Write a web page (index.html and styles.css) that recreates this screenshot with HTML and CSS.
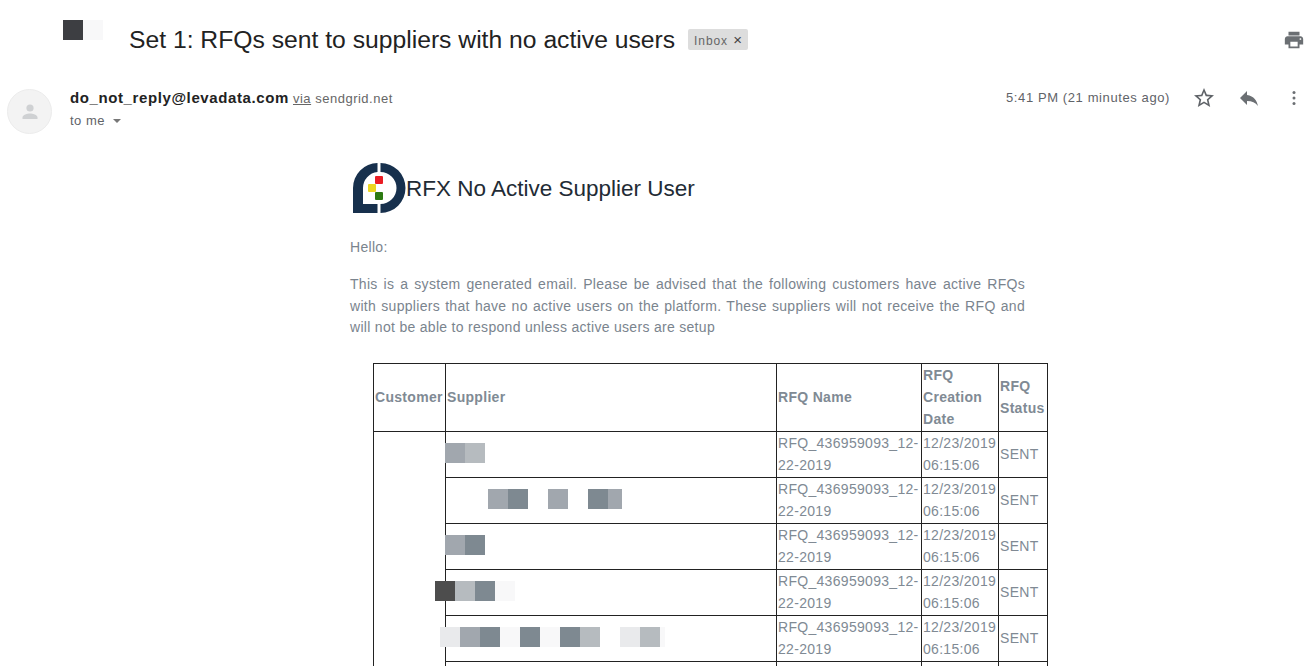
FILE: index.html
```html
<!DOCTYPE html>
<html lang="en">
<head>
<meta charset="UTF-8">
<title>Set 1: RFQs sent to suppliers with no active users</title>
<link rel="stylesheet" href="styles.css">
</head>
<body>

<div class="page">
  <div class="subject-row">
    <div class="mosaic subject-mosaic"><i class="t-dark"></i><i class="t-ghost"></i></div>
    <h1 class="subject">Set 1: RFQs sent to suppliers with no active users</h1>
    <span class="label">Inbox <b>&times;</b></span>
    <svg class="print-icon" viewBox="0 0 24 24" width="22" height="22"><path fill="#6b6f73" d="M19 8H5c-1.660 0-3 1.340-3 3v6h4v4h12v-4h4v-6c0-1.660-1.340-3-3-3zm-3 11H8v-5h8v5zm3-7c-.550 0-1-.450-1-1s.450-1 1-1 1 .450 1 1-.450 1-1 1zm-1-9H6v4h12V3z"/></svg>
  </div>

  <div class="sender-row">
    <div class="avatar">
      <svg viewBox="0 0 24 24" width="24" height="24"><circle cx="12" cy="8" r="3.600" fill="#cfd1d3"/><path fill="#cfd1d3" d="M4.500 19v-1.600c0-2.600 5-4 7.500-4s7.500 1.400 7.500 4V19z"/></svg>
    </div>
    <div class="sender-info">
      <div class="sender-line"><strong>do_not_reply@levadata.com</strong> <u>via</u> sendgrid.net</div>
      <div class="to-line">to me <span class="caret"></span></div>
    </div>
    <div class="sender-actions">
      <span class="time">5:41 PM (21 minutes ago)</span>
      <svg class="star-icon" viewBox="0 0 24 24" width="24" height="24"><path fill="#5f6368" d="M22 9.240l-7.190-.620L12 2 9.190 8.630 2 9.240l5.460 4.730L5.820 21 12 17.270 18.180 21l-1.630-7.030L22 9.240zM12 15.400l-3.760 2.270 1-4.280-3.320-2.880 4.380-.380L12 6.100l1.710 4.040 4.380.380-3.320 2.880 1 4.280L12 15.400z"/></svg>
      <svg class="reply-icon" viewBox="0 0 24 24" width="24" height="24"><path fill="#6b6f73" d="M10 9V5l-7 7 7 7v-4.100c5 0 8.500 1.600 11 5.100-1-5-4-10-11-11z"/></svg>
      <svg class="more-icon" viewBox="0 0 24 24" width="24" height="24"><circle cx="12" cy="6.500" r="1.500" fill="#6b6f73"/><circle cx="12" cy="12" r="1.500" fill="#6b6f73"/><circle cx="12" cy="17.500" r="1.500" fill="#6b6f73"/></svg>
    </div>
  </div>

  <div class="mail-body">
    <div class="mail-title">
      <svg class="logo" viewBox="0 0 56 56" width="56" height="56">
        <path fill="#17304d" d="M27.500 2A25 25 0 0 0 3 27V52H27.500V43H13V27A16 16 0 0 1 27.500 11Z"/>
        <path fill="#17304d" d="M30.500 2A25 25 0 0 1 30.500 52V43A16 16 0 0 0 30.500 11Z"/>
        <rect x="25" y="15" width="8" height="8" rx="1" fill="#ea1c24"/>
        <rect x="18" y="23" width="8" height="8" rx="1" fill="#ecd620"/>
        <rect x="25" y="31" width="8" height="8" rx="1" fill="#2c7a12"/>
      </svg>
      <h2>RFX No Active Supplier User</h2>
    </div>
    <p class="greeting">Hello:</p>
    <p class="intro">This is a system generated email. Please be advised that the following customers have active RFQs with suppliers that have no active users on the platform. These suppliers will not receive the RFQ and will not be able to respond unless active users are setup</p>

    <table class="rfq-table">
      <colgroup><col class="c-customer"><col class="c-supplier"><col class="c-name"><col class="c-date"><col class="c-status"></colgroup>
      <thead>
        <tr><th>Customer</th><th>Supplier</th><th>RFQ Name</th><th>RFQ Creation Date</th><th>RFQ Status</th></tr>
      </thead>
      <tbody>
        <tr>
          <td rowspan="6"></td>
          <td><div class="mosaic"><i class="t-mid"></i><i class="t-light"></i></div></td>
          <td>RFQ_436959093_12-22-2019</td><td>12/23/2019 06:15:06</td><td>SENT</td>
        </tr>
        <tr>
          <td><div class="mosaic indent-43"><i class="t-mid"></i><i class="t-deep"></i><i class="t-none"></i><i class="t-mid"></i><i class="t-none"></i><i class="t-deep"></i><i class="t-mid t-narrow"></i></div></td>
          <td>RFQ_436959093_12-22-2019</td><td>12/23/2019 06:15:06</td><td>SENT</td>
        </tr>
        <tr>
          <td><div class="mosaic"><i class="t-mid"></i><i class="t-deep"></i></div></td>
          <td>RFQ_436959093_12-22-2019</td><td>12/23/2019 06:15:06</td><td>SENT</td>
        </tr>
        <tr>
          <td><div class="mosaic pull-10"><i class="t-black"></i><i class="t-light"></i><i class="t-deep"></i><i class="t-ghost"></i></div></td>
          <td>RFQ_436959093_12-22-2019</td><td>12/23/2019 06:15:06</td><td>SENT</td>
        </tr>
        <tr>
          <td><div class="mosaic pull-5"><i class="t-pale"></i><i class="t-mid"></i><i class="t-deep"></i><i class="t-ghost"></i><i class="t-deep"></i><i class="t-ghost"></i><i class="t-deep"></i><i class="t-light"></i><i class="t-none"></i><i class="t-pale"></i><i class="t-light"></i><i class="t-ghost t-thin"></i></div></td>
          <td>RFQ_436959093_12-22-2019</td><td>12/23/2019 06:15:06</td><td>SENT</td>
        </tr>
        <tr>
          <td></td><td></td><td></td><td></td>
        </tr>
      </tbody>
    </table>
  </div>
</div>

</body>
</html>
```

FILE: styles.css
```css
html, body {
  margin: 0;
  height: 666px;
  overflow: hidden;
  background: #fff;
}

.page {
  height: 666px;
  overflow: hidden;
  font-family: "Liberation Sans", Arial, sans-serif;
  color: #222;
}

/* subject line */
.subject-row {
  display: flex;
  align-items: center;
  height: 40px;
  padding: 20px 10px 0 63px;
}

.subject-mosaic {
  align-self: flex-start;
  margin-right: 26px;
}

.subject {
  margin: 0;
  font-size: 24.700px;
  font-weight: 400;
  color: #222;
}

.label {
  margin: -2px 0 0 13px;
  padding: 0 5px 0 6px;
  height: 21px;
  line-height: 21px;
  background: #dddddd;
  border-radius: 2px;
  font-size: 12px;
  letter-spacing: 0.9px;
  color: #666;
}

.label b {
  margin-left: 1px;
  font-weight: 400;
  font-size: 15px;
  color: #444;
}

.print-icon {
  margin-left: auto;
}

/* sender */
.sender-row {
  display: flex;
  height: 46px;
  margin-top: 26px;
  padding: 0 9px 0 7px;
}

.avatar {
  box-sizing: border-box;
  display: flex;
  align-items: center;
  justify-content: center;
  width: 45px;
  height: 45px;
  margin-top: 3px;
  border-radius: 50%;
  background: #f3f3f3;
  border: 1px solid #ececec;
}

.sender-info {
  margin-left: 18px;
  padding-top: 2px;
}

.sender-line {
  font-size: 13px;
  letter-spacing: 0.5px;
  color: #666;
  line-height: 20px;
}

.sender-line strong {
  font-size: 15px;
  color: #222;
  letter-spacing: 0.6px;
}

.to-line {
  font-size: 13px;
  letter-spacing: 0.5px;
  color: #5f6368;
  line-height: 20px;
  margin-top: 2px;
}

.caret {
  display: inline-block;
  margin-left: 4px;
  vertical-align: 2px;
  border-left: 4px solid transparent;
  border-right: 4px solid transparent;
  border-top: 4px solid #777;
}

.sender-actions {
  display: flex;
  align-items: flex-start;
  margin-left: auto;
}

.time {
  font-size: 13px;
  line-height: 20px;
  letter-spacing: 0.6px;
  color: #5f6368;
  margin-top: 2px;
  margin-right: 22px;
}

.reply-icon {
  margin-left: 21px;
}

.more-icon {
  margin-left: 21px;
}

/* message body */
.mail-body {
  width: 675px;
  margin-left: 350px;
  margin-top: 29px;
  font-size: 14px;
  letter-spacing: 0.3px;
  color: #7a848e;
}

.mail-title {
  display: flex;
  align-items: center;
  height: 56px;
}

.logo {
  flex: none;
}

.mail-title h2 {
  margin: 0;
  font-size: 22.500px;
  font-weight: 400;
  letter-spacing: 0;
  color: #222b35;
}

.greeting {
  margin: 20px 0 0;
  line-height: 21px;
}

.intro {
  margin: 16px 0 0;
  line-height: 21.500px;
  text-align: justify;
}

.rfq-table {
  table-layout: fixed;
  width: 675px;
  margin: 24px 0 0 23px;
  border-collapse: collapse;
  font-size: 14px;
  line-height: 22px;
  color: #808a94;
}

.c-customer { width: 72px; }
.c-supplier { width: 331px; }
.c-name { width: 145px; }
.c-date { width: 77px; }
.c-status { width: 49px; }

.rfq-table th,
.rfq-table td {
  border: 1px solid #222;
  padding: 0 1px;
  text-align: left;
  vertical-align: middle;
}

.rfq-table tbody td {
  height: 45px;
}

.rfq-table th {
  height: 67px;
}

/* blurred-out names */
.mosaic {
  display: flex;
  height: 20px;
}

.mosaic i {
  display: block;
  flex: none;
  width: 20px;
  height: 20px;
}

.rfq-table .mosaic {
  margin: -2px 0 0 -2px;
}

.rfq-table .indent-43 { margin-left: 41px; }
.rfq-table .pull-10 { margin-left: -12px; }
.rfq-table .pull-5 { margin-left: -7px; }

.t-dark { background: #3d3e42; }
.t-black { background: #4d4d4d; }
.t-deep { background: #7e8991; }
.t-mid { background: #a1a7ae; }
.t-light { background: #b6bbbf; }
.t-pale { background: #e9eaec; }
.t-ghost { background: #f8f8f9; }
.t-none { background: transparent; }

.mosaic .t-narrow { width: 14px; }
.mosaic .t-thin { width: 5px; }
```
